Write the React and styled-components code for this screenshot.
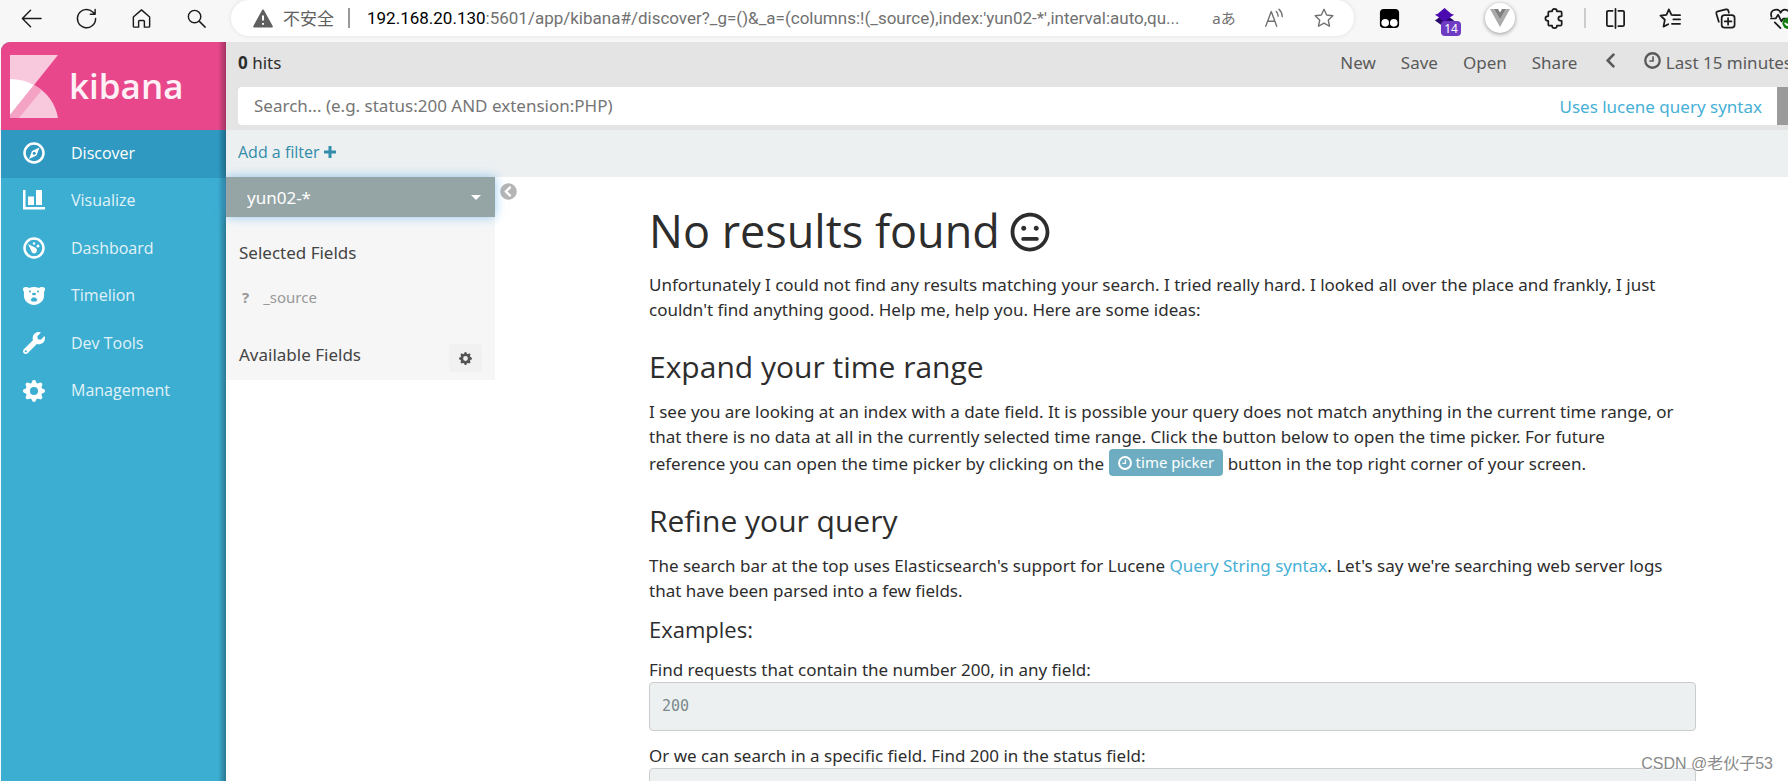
import React, { useState } from 'react'
import styled, { createGlobalStyle } from 'styled-components'
import { FaChevronLeft, FaWrench, FaRegMeh, FaChevronCircleLeft } from 'react-icons/fa'
import { BsGearFill } from 'react-icons/bs'

const navItems = [
  { name: 'Discover', icon: <CompassIcon /> },
  { name: 'Visualize', icon: <ChartIcon /> },
  { name: 'Dashboard', icon: <GaugeIcon /> },
  { name: 'Timelion', icon: <BearIcon /> },
  { name: 'Dev Tools', icon: <FaWrench /> },
  { name: 'Management', icon: <BsGearFill /> },
]

const App = () => {
  const [active, setActive] = useState('Discover');
  const [query, setQuery] = useState('');

  return (
    <Window>
      <GlobalStyle />
      <BrowserBar />
      <Frame>
        <SideNav>
          <Logo href="#">
            <KibanaMark />
            <span>kibana</span>
          </Logo>
          <NavList>
            {navItems.map((item) => (
              <NavLink
                href="#"
                key={item.name}
                $active={item.name === active}
                onClick={() => setActive(item.name)}
              >
                {item.icon}
                <span>{item.name}</span>
              </NavLink>
            ))}
          </NavList>
        </SideNav>
        <Main>
          <TopNav>
            <TopRow>
              <Hits><strong>0</strong> hits</Hits>
              <Menu>
                <MenuButton>New</MenuButton>
                <MenuButton>Save</MenuButton>
                <MenuButton>Open</MenuButton>
                <MenuButton>Share</MenuButton>
                <MenuButton aria-label="Previous"><FaChevronLeft /></MenuButton>
                <MenuButton><ClockIcon /> Last 15 minutes</MenuButton>
              </Menu>
            </TopRow>
            <SearchForm onSubmit={(e) => e.preventDefault()}>
              <input
                type="text"
                aria-label="Search"
                placeholder="Search... (e.g. status:200 AND extension:PHP)"
                value={query}
                onChange={(e) => setQuery(e.target.value)}
              />
              <a href="#">Uses lucene query syntax</a>
              <button type="submit" aria-label="Submit search" />
            </SearchForm>
          </TopNav>
          <FilterBar>
            <a href="#">Add a filter <PlusIcon /></a>
          </FilterBar>
          <Discover>
            <Fields>
              <PatternPicker>
                <select aria-label="Index pattern">
                  <option>yun02-*</option>
                </select>
              </PatternPicker>
              <FieldsHeading>Selected Fields</FieldsHeading>
              <Field><b>?</b><span>_source</span></Field>
              <FieldsHeading>
                Available Fields
                <GearButton aria-label="Field settings"><BsGearFill /></GearButton>
              </FieldsHeading>
            </Fields>
            <CollapseButton aria-label="Collapse sidebar"><FaChevronCircleLeft /></CollapseButton>
            <NoResults>
              <h1>No results found <FaRegMeh /></h1>
              <p>
                Unfortunately I could not find any results matching your search. I tried really hard. I looked all
                over the place and frankly, I just couldn't find anything good. Help me, help you. Here are some ideas:
              </p>
              <h2>Expand your time range</h2>
              <p>
                I see you are looking at an index with a date field. It is possible your query does not match anything
                in the current time range, or that there is no data at all in the currently selected time range. Click
                the button below to open the time picker. For future <NoWrap>reference you</NoWrap> can open the time
                picker by clicking on the <TimePicker><ClockIcon /> time picker</TimePicker> button in the top right
                corner of your screen.
              </p>
              <h2>Refine your query</h2>
              <p>
                The search bar at the top uses Elasticsearch's support for Lucene <a href="#">Query String syntax</a>.
                Let's say we're searching web server logs that have been parsed into a few fields.
              </p>
              <h3>Examples:</h3>
              <Example>
                Find requests that contain the number 200, in any field:
                <pre>200</pre>
              </Example>
              <Example>
                Or we can search in a specific field. Find 200 in the status field:
                <pre>status:200</pre>
              </Example>
            </NoResults>
          </Discover>
        </Main>
      </Frame>
      <Watermark>CSDN @老伙子53</Watermark>
    </Window>
  )
}

export default App

function BrowserBar() {
  return (
    <Chrome>
      <IconButton aria-label="Back">
        <Line viewBox="0 0 24 24"><path d="M22 12H3M11 3.500L2.500 12l8.500 8.500" /></Line>
      </IconButton>
      <IconButton aria-label="Refresh">
        <Line viewBox="0 0 24 24"><path d="M21.500 12A9.500 9.500 0 1 1 18.500 5.200L20.800 7.400M21 2.500v5h-5" /></Line>
      </IconButton>
      <IconButton aria-label="Home">
        <Line viewBox="0 0 24 24"><path d="M3.500 10.500L12 3l8.500 7.500V20q0 1-1 1H15v-6q0-1-1-1h-4q-1 0-1 1v6H4.500q-1 0-1-1z" /></Line>
      </IconButton>
      <IconButton aria-label="Search the web">
        <Line viewBox="0 0 24 24"><circle cx="10" cy="10" r="6.500" /><path d="M15 15l6 6" /></Line>
      </IconButton>
      <Address>
        <Warning viewBox="0 0 20 19">
          <path d="M10 1.500L18.800 17.500H1.200z" fill="#606060" stroke="#606060" strokeWidth="2" strokeLinejoin="round" />
          <path d="M10 6.500v5M10 14v1.800" stroke="#fff" strokeWidth="2" />
        </Warning>
        <Insecure>不安全</Insecure>
        <Url><b>192.168.20.130</b>:5601/app/kibana#/discover?_g=()&_a=(columns:!(_source),index:'yun02-*',interval:auto,qu...</Url>
        <AddressButton aria-label="Translate">aあ</AddressButton>
        <AddressButton aria-label="Read aloud">
          <Line viewBox="0 0 24 24"><path d="M3 21L9 5l6 16M5 15.500h8M14.500 5q2 2 2 5M17.500 2.500q3.500 3.500 3.500 8" /></Line>
        </AddressButton>
        <AddressButton aria-label="Favorite">
          <Line viewBox="0 0 24 24"><path d="M12 2.500l2.900 6.200 6.800.8-5 4.700 1.300 6.800-6-3.400-6 3.400 1.300-6.800-5-4.700 6.800-.8z" /></Line>
        </AddressButton>
      </Address>
      <Extensions>
        <IconButton aria-label="Tampermonkey">
          <svg viewBox="0 0 24 24">
            <rect x="2" y="2" width="20" height="20" rx="4" fill="#000" />
            <circle cx="7.500" cy="16.500" r="4" fill="#fff" />
            <circle cx="16.500" cy="16.500" r="4" fill="#fff" />
          </svg>
        </IconButton>
        <IconButton aria-label="Layers">
          <svg viewBox="0 0 24 24">
            <path d="M2 14l10-7 10 7-10 7z" fill="#2b0a6b" />
            <path d="M2 8l3-1 7-6 7 6 3 1-3 2-7 6-7-6z" fill="#4a0ab0" />
          </svg>
          <Badge>14</Badge>
        </IconButton>
        <IconButton aria-label="Vue devtools">
          <Round>
            <svg viewBox="0 0 20 18">
              <path d="M0 0h4l6 10.500L16 0h4L10 18z" fill="#aaa" />
              <path d="M4 0h4l2 3.500L12 0h4l-6 10.500z" fill="#808080" />
            </svg>
          </Round>
        </IconButton>
        <IconButton aria-label="Extensions">
          <Line $bold viewBox="0 0 24 24">
            <path d="M7 4.500h2.500q0-2.500 2.500-2.500t2.500 2.500H18q1.500 0 1.500 1.500v3.500q-3.500 0-3.500 2.500t3.500 2.500V18q0 1.500-1.500 1.500h-3.500Q14.500 22 12 22t-2.500-2.500H7q-1.500 0-1.500-1.500v-3.500Q2.500 14.500 2.500 12t3-2.500V6q0-1.500 1.500-1.500z" />
          </Line>
        </IconButton>
        <Divider />
        <IconButton aria-label="Split screen">
          <Line $bold viewBox="0 0 24 24"><path d="M9 4H4.500Q3 4 3 5.500v13Q3 20 4.500 20H9M15 4h4.500Q21 4 21 5.500v13q0 1.500-1.500 1.500H15M12 2v20" /></Line>
        </IconButton>
        <IconButton aria-label="Favorites">
          <Line $bold viewBox="0 0 24 24"><path d="M15.500 8.500l-2.500-.3L10.300 2.500 7.800 8.300l-6.300.7 4.600 4.300-1.400 7.200 5-2.500M15.500 8.500H22M15 13h7M13.500 17.500H22" /></Line>
        </IconButton>
        <IconButton aria-label="Collections">
          <Line $bold viewBox="0 0 24 24">
            <path d="M5 15.500L2.500 7Q2 5 4 4.500l8.500-2q2-.5 2.500 1.500l.5 2" />
            <rect x="8" y="8.500" width="13.500" height="13" rx="3" />
            <path d="M14.700 11.500v7M11.200 15h7" />
          </Line>
        </IconButton>
        <IconButton aria-label="Performance">
          <Line $bold viewBox="0 0 24 24">
            <path d="M2.500 10Q1 4 6 3t6 3q2-4 6-3t4 7M2 12h5l2.500-4 3.500 7 2-3h3M6 16l6 6" />
            <circle cx="20" cy="17" r="6" fill="#107c10" stroke="none" />
            <path d="M17 17l2 2 4-4" stroke="#fff" />
          </Line>
        </IconButton>
      </Extensions>
    </Chrome>
  )
}

function KibanaMark() {
  return (
    <svg viewBox="0 0 48 63">
      <path d="M0 0h48L0 60z" fill="#f8c9dd" />
      <path d="M0 24q13 0 24 6L0 60z" fill="#fff" />
      <path d="M24 30q20 11 24 33H0v-3z" fill="#f8c9dd" />
      <path d="M24 30l8 5L9 63H0v-3z" fill="#f4a3c5" />
    </svg>
  )
}

function CompassIcon() {
  return (
    <svg viewBox="0 0 22 22">
      <circle cx="11" cy="11" r="9.500" fill="none" stroke="currentColor" strokeWidth="2.500" />
      <path d="M16.500 5.500l-3 8-7.500 3.500 3-8z" fill="currentColor" />
      <circle cx="11.200" cy="11.200" r="1.500" fill="#2f99c1" />
    </svg>
  )
}

function ChartIcon() {
  return (
    <svg viewBox="0 0 22 22" fill="currentColor">
      <path d="M0 0h2.500v17H22v2.500H0zM5 6.500h6V15H5zM13 0h6v15h-6z" />
    </svg>
  )
}

function GaugeIcon() {
  return (
    <svg viewBox="0 0 22 22" fill="currentColor">
      <circle cx="11" cy="11" r="9.500" fill="none" stroke="currentColor" strokeWidth="2.500" />
      <path d="M5 7l7 3.500q3 2 1.500 4.500t-4.500.5z" />
      <circle cx="11" cy="6.500" r="1.200" />
      <circle cx="15" cy="9" r="1.500" />
    </svg>
  )
}

function BearIcon() {
  return (
    <svg viewBox="0 0 22 22">
      <path d="M0 4q0-2 3-2 2 0 3 1 5-2 10 0 1-1 3-1 3 0 3 2t-1 3q1 8-4 11-3 2-6 2t-6-2Q0 15 1 7 0 6 0 4z" fill="currentColor" />
      <g fill="#3caed2">
        <circle cx="7" cy="6.500" r="1" />
        <circle cx="15" cy="6.500" r="1" />
        <ellipse cx="11" cy="9" rx="2" ry="1.200" />
        <path d="M7.500 15l2-2.500h3l2 2.500-1.500 1.500H9z" />
      </g>
    </svg>
  )
}

function ClockIcon() {
  return (
    <svg viewBox="0 0 16 16" fill="none" stroke="currentColor">
      <circle cx="8" cy="8" r="6.800" strokeWidth="2.200" />
      <path d="M8.500 4v4.500H5" strokeWidth="1.500" />
    </svg>
  )
}

function PlusIcon() {
  return (
    <svg viewBox="0 0 12 12" fill="currentColor">
      <path d="M4.500 0h3v4.500H12v3H7.500V12h-3V7.500H0v-3h4.500z" />
    </svg>
  )
}

const GlobalStyle = createGlobalStyle`
  * {
    box-sizing: border-box;
  }
  body {
    margin: 0;
    overflow: hidden;
    background: #fff;
    color: #2d2d2d;
    font: 17px/25px 'Noto Sans', 'Open Sans', 'Noto Sans CJK SC', sans-serif;
  }
  a {
    color: #46b0d6;
    text-decoration: none;
  }
  button {
    border: 0;
    padding: 0;
    background: none;
    color: inherit;
    font: inherit;
    cursor: pointer;
  }
`

const Window = styled.div`
  display: flex;
  flex-direction: column;
  height: 100vh;
  overflow: hidden;
  background: #f7f7f7;
`

const Chrome = styled.div`
  display: flex;
  flex: none;
  height: 42px;
  padding: 0 0 6px 4px;
  color: #1b1b1b;
`

const IconButton = styled.button`
  position: relative;
  display: flex;
  flex: none;
  align-items: center;
  justify-content: center;
  width: 55px;
  svg {
    width: 23px;
    height: 23px;
  }
`

const Line = styled.svg`
  fill: none;
  stroke: currentColor;
  stroke-width: ${(props) => (props.$bold ? 1.8 : 1.5)};
  stroke-linecap: round;
  stroke-linejoin: round;
`

const Address = styled.div`
  display: flex;
  flex: 1;
  align-items: center;
  min-width: 0;
  margin: 0 8px 0 7px;
  padding: 0 5px 0 22px;
  background: #fff;
  border-radius: 18px;
  box-shadow: 0 0 4px rgba(0, 0, 0, 0.1);
`

const Warning = styled.svg`
  flex: none;
  width: 20px;
  height: 19px;
`

const Insecure = styled.span`
  flex: none;
  margin-left: 10px;
  padding-right: 14px;
  color: #606060;
  font-family: 'Noto Sans CJK SC', sans-serif;
  line-height: 20px;
  border-right: 2px solid #999;
`

const Url = styled.span`
  flex: 1;
  min-width: 0;
  margin-left: 17px;
  overflow: hidden;
  color: #717171;
  font-family: Roboto, sans-serif;
  white-space: nowrap;
  b {
    color: #000;
    font-weight: 400;
  }
`

const AddressButton = styled.button`
  display: flex;
  flex: none;
  align-items: center;
  justify-content: center;
  width: 50px;
  color: #707070;
  font-size: 15px;
  svg {
    width: 22px;
    height: 22px;
  }
`

const Extensions = styled.div`
  display: flex;
  flex: none;
  align-items: center;
  margin-right: -20px;
`

const Badge = styled.span`
  position: absolute;
  left: 24px;
  top: 14px;
  width: 20px;
  border-radius: 4px;
  background: #6f3bc4;
  color: #fff;
  font-size: 12px;
  line-height: 15px;
`

const Round = styled.span`
  display: flex;
  align-items: center;
  justify-content: center;
  width: 30px;
  height: 30px;
  border-radius: 50%;
  background: #fff;
  box-shadow: 0 1px 4px rgba(0, 0, 0, 0.4);
  svg {
    width: 20px;
    height: 18px;
  }
`

const Divider = styled.span`
  width: 2px;
  height: 20px;
  margin: 0 2px;
  background: #ccc;
`

const Frame = styled.div`
  display: flex;
  flex: 1;
  min-height: 0;
  margin-left: 1px;
  overflow: hidden;
  border-radius: 9px 0 0 0;
  background: #fff;
`

const SideNav = styled.nav`
  flex: none;
  width: 225px;
  background: linear-gradient(to left, rgba(0, 0, 0, 0.3), transparent 8px), #3caed2;
`

const Logo = styled.a`
  display: flex;
  align-items: center;
  height: 88px;
  padding: 0 9px;
  gap: 11px;
  background: linear-gradient(to left, rgba(0, 0, 0, 0.3), transparent 8px), #e8488b;
  color: #fff0f7;
  font: 600 35px/40px 'Open Sans', sans-serif;
  svg {
    width: 48px;
    height: 63px;
  }
`

const NavList = styled.div`
  display: grid;
  grid-auto-rows: 1fr;
  height: 285px;
`

const NavLink = styled.a`
  display: flex;
  align-items: center;
  gap: 26px;
  padding: 0 22px 1px;
  color: #fff;
  font-family: 'Open Sans', sans-serif;
  font-size: 16px;
  background: ${(props) =>
    props.$active ? 'linear-gradient(to left, rgba(0, 0, 0, 0.3), transparent 8px), #2f99c1' : 'none'};
  svg {
    width: 22px;
    height: 22px;
  }
  span {
    opacity: ${(props) => (props.$active ? 1 : 0.85)};
  }
`

const Main = styled.main`
  display: flex;
  flex: 1;
  flex-direction: column;
  min-width: 0;
`

const TopNav = styled.header`
  flex: none;
  padding: 0 0 5px 12px;
  background: #e4e4e4;
`

const TopRow = styled.div`
  display: flex;
  justify-content: space-between;
  height: 45px;
  padding-top: 8px;
`

const Hits = styled.span`
  strong {
    font-weight: 700;
  }
`

const Menu = styled.div`
  display: flex;
  align-items: flex-start;
  gap: 25px;
  margin-right: -4px;
  color: #5a5a5a;
  white-space: nowrap;
`

const MenuButton = styled.button`
  svg {
    width: 17px;
    height: 17px;
  }
`

const SearchForm = styled.form`
  display: flex;
  align-items: center;
  height: 38px;
  background: #fff;
  border-radius: 4px 0 0 4px;
  overflow: hidden;
  input {
    flex: 1;
    min-width: 0;
    height: 38px;
    padding: 0 16px 2px;
    border: 0;
    outline: 0;
    background: none;
    color: #2d2d2d;
    font: inherit;
  }
  input::placeholder {
    color: #757575;
    opacity: 1;
  }
  a {
    padding-right: 15px;
  }
  button {
    width: 11px;
    height: 38px;
    background: #9b9b9b;
  }
`

const FilterBar = styled.div`
  display: flex;
  flex: none;
  align-items: center;
  height: 47px;
  padding: 0 12px 2px;
  background: #ecf0f1;
  font-family: 'Open Sans', sans-serif;
  font-size: 16px;
  a {
    color: #328caa;
  }
  svg {
    width: 12px;
    height: 12px;
  }
`

const Discover = styled.div`
  display: flex;
  align-items: flex-start;
`

const Fields = styled.aside`
  flex: none;
  width: 269px;
  padding-bottom: 8px;
  background: #f6f6f6;
`

const PatternPicker = styled.div`
  position: relative;
  margin-bottom: 23px;
  box-shadow: 0 0 10px rgba(82, 168, 236, 0.6);
  select {
    display: block;
    width: 100%;
    height: 40px;
    padding: 0 21px;
    border: 0;
    outline: 0;
    appearance: none;
    background: #95a5a6;
    color: #fff;
    font: inherit;
  }
  &::after {
    content: '';
    position: absolute;
    right: 14px;
    top: 18px;
    border: 5px solid transparent;
    border-top-color: #fff;
    border-bottom: 0;
    pointer-events: none;
  }
`

const FieldsHeading = styled.div`
  display: flex;
  justify-content: space-between;
  padding: 0 13px;
  color: #444;
`

const Field = styled.div`
  display: flex;
  gap: 14px;
  margin: 20px 0 32px;
  padding: 0 16px;
  color: #999;
  font-size: 15px;
`

const GearButton = styled.button`
  display: flex;
  align-items: center;
  justify-content: center;
  width: 33px;
  height: 28px;
  margin-top: 2px;
  border-radius: 4px;
  background: #f1f1f1;
  color: #555;
  svg {
    width: 13px;
    height: 13px;
  }
`

const CollapseButton = styled.button`
  flex: none;
  display: flex;
  margin: 6px 0 0 5px;
  color: #b5b5b5;
  svg {
    width: 17px;
    height: 17px;
  }
`

const NoResults = styled.section`
  flex: 1;
  min-width: 0;
  padding: 29px 92px 0 132px;
  h1, h2, h3 {
    margin: 0;
    font-family: 'Open Sans', sans-serif;
    font-weight: 400;
  }
  h1 {
    margin-bottom: 16px;
    font-size: 45px;
    line-height: 50px;
    svg {
      width: 40px;
      height: 40px;
      margin-left: -2px;
      vertical-align: -4px;
    }
  }
  h2 {
    margin: 29px 0 16px;
    font-size: 30px;
    line-height: 32px;
  }
  h3 {
    margin: 14px 0 16px;
    font-size: 22px;
    line-height: 24px;
  }
  p {
    margin: 0;
  }
`

const NoWrap = styled.span`
  white-space: nowrap;
`

const TimePicker = styled.button`
  display: inline-flex;
  align-items: center;
  gap: 4px;
  height: 27px;
  padding: 0 9px;
  border-radius: 4px;
  background: #6eadc1;
  color: #fff;
  font-size: 15px;
  svg {
    width: 14px;
    height: 14px;
  }
`

const Example = styled.div`
  margin-bottom: 12px;
  pre {
    margin: 0;
    padding: 11px 12px;
    border: 1px solid #ccc;
    border-radius: 4px;
    background: #ecf0f1;
    color: #7b8a8b;
    font: 15px/25px 'DejaVu Sans Mono', monospace;
  }
`

const Watermark = styled.div`
  position: absolute;
  right: 15px;
  bottom: 5px;
  color: #8a8a8a;
  font-family: 'Liberation Sans', 'Noto Sans CJK SC', sans-serif;
  font-size: 16px;
  text-shadow: 1px 1px 1px #fff;
`
